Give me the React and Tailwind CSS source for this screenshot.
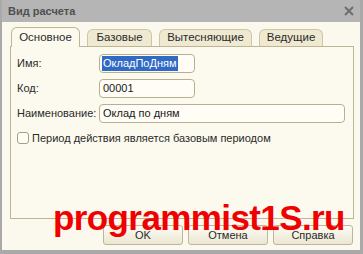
import React from "react";

const font = { fontFamily: '"Liberation Sans", Arial, sans-serif' };

function Tab({ label, active, w }) {
  return (
    <div
      className={
        "flex items-center justify-center rounded-t-[6px] border border-b-0 text-[11.5px] text-[#2a2a2a] " +
        (active
          ? "h-[20px] border-[#bdb594] bg-[#fcfaef] relative z-10 -mb-px"
          : "h-[17px] border-[#cdc6a6] bg-[#efe9d2] mb-0")
      }
      style={{ width: w }}
    >
      {label}
    </div>
  );
}

function Input({ value, w, selected }) {
  return (
    <div
      className="flex h-[19px] items-center rounded-[4px] border border-[#b7b08f] bg-[#fffdf5] px-[2px] text-[11px] text-[#1a1a1a]"
      style={{ width: w }}
    >
      {selected ? (
        <span className="bg-[#316ac5] px-[1px] leading-[15px] text-white">{value}</span>
      ) : (
        <span className="px-[1px]">{value}</span>
      )}
    </div>
  );
}

function Btn({ label }) {
  return (
    <div className="flex h-[20px] w-[80px] items-center justify-center rounded-[3px] border border-[#bcb69c] bg-gradient-to-b from-[#fdfbf3] to-[#ece7d3] text-[11px] text-[#2a2a2a]">
      {label}
    </div>
  );
}

export default function App() {
  return (
    <div className="relative h-[254px] w-[363px] overflow-hidden bg-[#a9a9a9]" style={font}>
      <div className="flex h-full flex-col pl-[2px] pr-[3px] pb-[4px]">
        <div className="flex h-[22px] items-center justify-between bg-[#b5b5b5] pl-[6px] pr-[5px]">
          <span className="text-[11px] font-bold text-[#505050]">Вид расчета</span>
          <svg width="12" height="12" viewBox="0 0 12 12">
            <path d="M2 2 L10 10 M10 2 L2 10" stroke="#6e6e6e" strokeWidth="2" />
          </svg>
        </div>
        <div className="flex flex-1 flex-col bg-[#fbf8ed] pl-[8px] pr-[6px] pt-[5px]">
          <div className="flex items-end gap-[7px] pl-[1px]">
            <Tab label="Основное" active w={69} />
            <Tab label="Базовые" w={65} />
            <Tab label="Вытесняющие" w={93} />
            <Tab label="Ведущие" w={64} />
          </div>
          <div className="flex h-[173px] flex-col gap-[6px] border border-[#bdb594] bg-[#fcfaef] pl-[6px] pr-[6px] pt-[7px]">
            <div className="flex items-center">
              <span className="w-[82px] text-[11px] text-[#2a2a2a]">Имя:</span>
              <Input value="ОкладПоДням" w={96} selected />
            </div>
            <div className="flex items-center">
              <span className="w-[82px] text-[11px] text-[#2a2a2a]">Код:</span>
              <Input value="00001" w={96} />
            </div>
            <div className="flex items-center">
              <span className="w-[82px] text-[11px] text-[#2a2a2a]">Наименование:</span>
              <Input value="Оклад по дням" w={246} />
            </div>
            <div className="flex items-center gap-[3px] pt-[1px]">
              <div className="h-[12px] w-[12px] rounded-[3px] border border-[#a59f84] bg-[#fffdf5]" />
              <span className="text-[11px] text-[#2a2a2a]">Период действия является базовым периодом</span>
            </div>
          </div>
          <div className="flex justify-end gap-[5px] pr-[1px] pt-[6px]">
            <Btn label="OK" />
            <Btn label="Отмена" />
            <Btn label="Справка" />
          </div>
        </div>
      </div>
      <div
        className="absolute left-[53px] top-[200px] text-[35px] font-bold leading-none tracking-[-0.6px] text-[#f00000]"
        style={{ fontFamily: '"Liberation Sans", Arial, sans-serif' }}
      >
        programmist1S.ru
      </div>
    </div>
  );
}
